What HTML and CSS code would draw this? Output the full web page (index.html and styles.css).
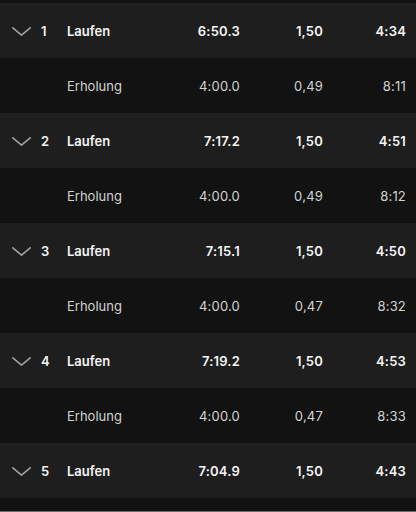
FILE: index.html
```html
<!DOCTYPE html>
<html lang="de">
<head>
<meta charset="utf-8">
<link rel="stylesheet" href="styles.css">
</head>
<body>
<div class="list">
  <div class="row run"><span class="chev"><svg width="19" height="9" viewBox="0 0 19 9"><polyline points="0.8,0.8 9.5,8.2 18.2,0.8"/></svg></span><span class="num">1</span><span class="name">Laufen</span><span class="val">6:50.3</span><span class="val">1,50</span><span class="val">4:34</span></div>
  <div class="row rest"><span></span><span></span><span class="name">Erholung</span><span class="val">4:00.0</span><span class="val">0,49</span><span class="val">8:11</span></div>
  <div class="row run"><span class="chev"><svg width="19" height="9" viewBox="0 0 19 9"><polyline points="0.8,0.8 9.5,8.2 18.2,0.8"/></svg></span><span class="num">2</span><span class="name">Laufen</span><span class="val">7:17.2</span><span class="val">1,50</span><span class="val">4:51</span></div>
  <div class="row rest"><span></span><span></span><span class="name">Erholung</span><span class="val">4:00.0</span><span class="val">0,49</span><span class="val">8:12</span></div>
  <div class="row run"><span class="chev"><svg width="19" height="9" viewBox="0 0 19 9"><polyline points="0.8,0.8 9.5,8.2 18.2,0.8"/></svg></span><span class="num">3</span><span class="name">Laufen</span><span class="val">7:15.1</span><span class="val">1,50</span><span class="val">4:50</span></div>
  <div class="row rest"><span></span><span></span><span class="name">Erholung</span><span class="val">4:00.0</span><span class="val">0,47</span><span class="val">8:32</span></div>
  <div class="row run"><span class="chev"><svg width="19" height="9" viewBox="0 0 19 9"><polyline points="0.8,0.8 9.5,8.2 18.2,0.8"/></svg></span><span class="num">4</span><span class="name">Laufen</span><span class="val">7:19.2</span><span class="val">1,50</span><span class="val">4:53</span></div>
  <div class="row rest"><span></span><span></span><span class="name">Erholung</span><span class="val">4:00.0</span><span class="val">0,47</span><span class="val">8:33</span></div>
  <div class="row run"><span class="chev"><svg width="19" height="9" viewBox="0 0 19 9"><polyline points="0.8,0.8 9.5,8.2 18.2,0.8"/></svg></span><span class="num">5</span><span class="name">Laufen</span><span class="val">7:04.9</span><span class="val">1,50</span><span class="val">4:43</span></div>
  <div class="row rest tail"></div>
</div>
</body>
</html>
```
FILE: styles.css
```css
html, body {
  margin: 0;
  padding: 0;
  background: #121212;
  height: 512px;
  overflow: hidden;
}
body {
  font-family: "Inter", "Liberation Sans", sans-serif;
  font-size: 13px;
  -webkit-font-smoothing: antialiased;
}
.list {
  padding-top: 3px;
  display: flex;
  flex-direction: column;
}
.row {
  height: 55px;
  display: grid;
  grid-template-columns: 28px 27px 1fr 80px 83px 83px;
  align-items: center;
  padding: 0 10px 0 12px;
}
.run {
  background: #1e1e1e;
  color: #f4f4f4;
  font-weight: 600;
}
.rest {
  background: #121212;
  color: #d2d2d2;
  font-weight: 400;
}
.tail {
  height: 13px;
  border-bottom: 1px solid #6e6e6e;
}
.chev {
  display: flex;
  align-items: center;
  padding-top: 2px;
}
.chev svg polyline {
  fill: none;
  stroke: #a0a0a0;
  stroke-width: 1.6;
  stroke-linecap: round;
  stroke-linejoin: round;
}
.num {
  padding-left: 1px;
}
.val {
  text-align: right;
  letter-spacing: 0.2px;
}
```
